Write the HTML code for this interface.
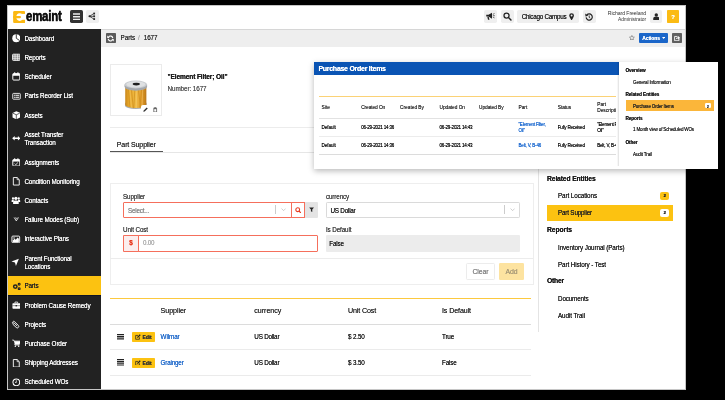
<!DOCTYPE html>
<html><head><meta charset="utf-8"><title>eMaint - Parts</title>
<style>
html,body{margin:0;padding:0}
body{will-change:transform;width:725px;height:400px;overflow:hidden;position:relative;background:#000;font-family:"Liberation Sans",sans-serif;color:#222}
.a{position:absolute}
.t{text-shadow:0 0 0.35px currentColor;position:absolute;white-space:nowrap;line-height:10px;height:10px;margin-top:-5px;font-size:6.3px;letter-spacing:-0.02em;color:#2a2a2a}
.b{font-weight:bold}
.sb{color:#fff;font-size:6.3px;left:24.4px}
.ic{position:absolute;left:11.6px;width:8.6px;height:8.6px;margin-top:-4.3px}
.hb{position:absolute;top:10.3px;height:12.6px;background:#efefef;border-radius:1.7px}
.ln{position:absolute;height:1px;background:#e4e4e4}
</style></head><body>
<!-- app frame -->
<div class="a" id="app" style="left:7.1px;top:4.5px;width:679.3px;height:385.8px;background:#fff;border:0.8px solid #c6c6c6;box-sizing:border-box"></div>
<!-- breadcrumb bar -->
<div class="a" style="left:101px;top:29px;width:584.3px;height:18px;background:#eeeeee"></div>
<div class="a" style="left:7.9px;top:28.6px;width:677.4px;height:1px;background:#d6d6d6"></div>
<!-- sidebar -->
<div class="a" id="side" style="left:7.9px;top:29px;width:93.4px;height:360.2px;background:#222"></div>
<div class="a" style="left:7.9px;top:276px;width:93.4px;height:19.5px;background:#0e1424"></div><div class="a" style="left:7.9px;top:276.4px;width:93.4px;height:18.7px;background:#fcc211"></div>
<!-- sidebar items -->
<svg class="ic" style="top:38.5px" viewBox="0 0 16 16"><circle cx="8" cy="8" r="7.5" fill="#fff"/><path d="M8 8V0.5M8 8l6 4" stroke="#222" stroke-width="1.6" fill="none"/></svg>
<div class="t sb" style="top:38.8px">Dashboard</div>
<svg class="ic" style="top:57.6px" viewBox="0 0 16 16"><rect x="1" y="2.2" width="14" height="11.6" rx="1.4" fill="#8a8a8a" stroke="#fff" stroke-width="1.5"/><path d="M1 6h14M1 9.9h14M5.7 2.2v11.6M10.3 2.2v11.6" stroke="#fff" stroke-width="1.1"/></svg>
<div class="t sb" style="top:57.8px">Reports</div>
<svg class="ic" style="top:76.7px" viewBox="0 0 16 16"><rect x="1.5" y="3" width="13" height="12" rx="1.5" fill="none" stroke="#fff" stroke-width="1.8"/><rect x="1.5" y="3" width="13" height="4" fill="#fff"/><rect x="4" y="0.5" width="2" height="4" fill="#fff"/><rect x="10" y="0.5" width="2" height="4" fill="#fff"/></svg>
<div class="t sb" style="top:76.8px">Scheduler</div>
<svg class="ic" style="top:95.8px;left:11.5px;width:9px" viewBox="0 0 16 16"><rect x="1" y="2.6" width="14" height="10.8" rx="1.3" fill="none" stroke="#fff" stroke-width="1.6"/><path d="M3.2 6.2h9.6M3.2 9.8h9.6" stroke="#fff" stroke-width="2"/><path d="M5.8 5v6" stroke="#222" stroke-width="0.8"/></svg>
<div class="t sb" style="top:95.8px">Parts Reorder List</div>
<svg class="ic" style="top:114.9px" viewBox="0 0 16 16"><path d="M8 0.5L15 3.5V12L8 15.5L1 12V3.5Z" fill="#fff"/><path d="M1.5 4L8 7L14.5 4M8 7V15" stroke="#222" stroke-width="1.3" fill="none"/></svg>
<div class="t sb" style="top:115.8px">Assets</div>
<svg class="ic" style="top:138.5px" viewBox="0 0 16 16"><path d="M0.3 8L5 3.8V6.5H11V3.8L15.7 8L11 12.2V9.5H5V12.2Z" fill="#fff"/></svg>
<div class="t sb" style="top:134.8px">Asset Transfer</div>
<div class="t sb" style="top:142.8px">Transaction</div>
<svg class="ic" style="top:162px" viewBox="0 0 16 16"><rect x="1.5" y="3" width="13" height="12" rx="1.5" fill="none" stroke="#fff" stroke-width="1.8"/><rect x="1.5" y="3" width="13" height="3.6" fill="#fff"/><rect x="4" y="0.5" width="2" height="4" fill="#fff"/><rect x="10" y="0.5" width="2" height="4" fill="#fff"/><path d="M5 10.5l2 2l4-4" stroke="#fff" stroke-width="1.5" fill="none"/></svg>
<div class="t sb" style="top:162.8px">Assignments</div>
<svg class="ic" style="top:181.3px" viewBox="0 0 16 16"><path d="M2.5 1h7l4 4v10h-11z" fill="none" stroke="#fff" stroke-width="1.7" stroke-linejoin="round"/><path d="M9.5 1v4h4" fill="none" stroke="#fff" stroke-width="1.3"/></svg>
<div class="t sb" style="top:181.8px">Condition Monitoring</div>
<svg class="ic" style="top:200.5px;left:11.4px;width:9.8px;height:8.6px;margin-top:-4.4px" viewBox="0 0 16 16"><circle cx="8" cy="4.4" r="3" fill="#fff"/><path d="M2.8 15v-3.4a3.4 3.4 0 0 1 3.4-3.4h3.6a3.4 3.4 0 0 1 3.4 3.4V15z" fill="#fff"/><circle cx="2.6" cy="4.2" r="2.1" fill="#fff"/><circle cx="13.4" cy="4.2" r="2.1" fill="#fff"/><path d="M0 11v-2a2.4 2.4 0 0 1 2.4-2.4h1.6V11zM16 11v-2a2.4 2.4 0 0 0-2.4-2.4h-1.6V11z" fill="#fff"/></svg>
<div class="t sb" style="top:200.8px">Contacts</div>
<svg class="ic" style="top:219.6px" viewBox="0 0 16 16"><path d="M4 4.6l4 6.4l4-6.4" stroke="#fff" stroke-width="1.5" fill="none"/><path d="M6.4 4.4l1.6 2.6l1.6-2.6" stroke="#fff" stroke-width="1.1" fill="none"/></svg>
<div class="t sb" style="top:219.8px">Failure Modes (Sub)</div>
<svg class="ic" style="top:239px;left:11.4px;width:9.6px;height:8.8px;margin-top:-4.4px" viewBox="0 0 16 16"><rect x="1" y="2" width="14" height="12" rx="1.6" fill="none" stroke="#fff" stroke-width="1.7"/><path d="M2.4 12.6V10l3.4-3.4l2.2 2l3.4-4l2.2 2.2v5.8z" fill="#fff"/><circle cx="4.8" cy="5.4" r="1.3" fill="#fff"/></svg>
<div class="t sb" style="top:238.8px">Interactive Plans</div>
<svg class="ic" style="top:262.4px;left:11.2px;width:8.4px" viewBox="0 0 16 16"><path d="M15 1L9.4 15.2L7.6 8.4L0.8 6.6Z" fill="#fff"/></svg>
<div class="t sb" style="top:258.8px">Parent Functional</div>
<div class="t sb" style="top:266.8px">Locations</div>
<svg class="ic" style="top:286px;left:11.8px;width:9.4px;height:8.6px" viewBox="0 0 16 16"><circle cx="5.4" cy="8.6" r="3.2" fill="none" stroke="#222" stroke-width="2.7"/><circle cx="12.6" cy="4" r="1.7" fill="none" stroke="#222" stroke-width="2.1"/><circle cx="12.6" cy="12.6" r="1.7" fill="none" stroke="#222" stroke-width="2.1"/></svg>
<div class="t sb" style="top:285.8px;color:#222">Parts</div>
<svg class="ic" style="top:305px" viewBox="0 0 16 16"><rect x="0.8" y="4" width="14.4" height="10.5" rx="1.3" fill="#fff"/><path d="M5.5 4V2h5v2" fill="none" stroke="#fff" stroke-width="1.5"/><path d="M0.8 8.7h14.4" stroke="#222" stroke-width="0.9"/><rect x="6.6" y="7.6" width="2.8" height="2.4" fill="#222"/></svg>
<div class="t sb" style="top:305.8px">Problem Cause Remedy</div>
<svg class="ic" style="top:324.4px;left:11.4px" viewBox="0 0 16 16"><path d="M2.6 4.4a2.3 2.3 0 0 1 3.6-1.6l7.4 7.2a2.7 2.7 0 0 1-3.8 3.9L3.6 8a1.6 1.6 0 0 1 2.3-2.2l5 4.8" fill="none" stroke="#fff" stroke-width="1.7" stroke-linecap="round"/></svg>
<div class="t sb" style="top:324.8px">Projects</div>
<svg class="ic" style="top:343.5px" viewBox="0 0 16 16"><path d="M0.5 2h2.6l0.6 2H15.5l-1.6 5.6H5.2l0.4 1.6h8.2" fill="none" stroke="#fff" stroke-width="1.5"/><path d="M3.7 4H15.5l-1.6 5.6H5.2z" fill="#fff"/><circle cx="6.2" cy="13.6" r="1.4" fill="#fff"/><circle cx="12.4" cy="13.6" r="1.4" fill="#fff"/></svg>
<div class="t sb" style="top:343.8px">Purchase Order</div>
<svg class="ic" style="top:363px" viewBox="0 0 16 16"><path d="M2.5 1h7l4 4v10h-11z" fill="none" stroke="#fff" stroke-width="1.7" stroke-linejoin="round"/><path d="M9.5 1v4h4" fill="none" stroke="#fff" stroke-width="1.3"/></svg>
<div class="t sb" style="top:362.8px">Shipping Addresses</div>
<svg class="ic" style="top:381.8px" viewBox="0 0 16 16"><circle cx="8" cy="8" r="6.3" fill="none" stroke="#fff" stroke-width="1.9"/><path d="M8 4.3V8.3H5.6" fill="none" stroke="#fff" stroke-width="1.4"/></svg>
<div class="t sb" style="top:381.8px">Scheduled WOs</div>
<!-- header -->
<svg class="a" style="left:13px;top:10.8px;width:12.4px;height:12.1px" viewBox="0 0 24 24"><rect width="24" height="24" rx="2.6" fill="#fbb812"/><ellipse cx="13" cy="12" rx="6.7" ry="7.6" fill="#fff"/><rect x="17" y="5.8" width="7" height="11.6" fill="#fff"/><path d="M0 9.7h13.4a2.3 2.3 0 0 1 0 4.6H0z" fill="#fbb812"/></svg>
<div class="t b" style="left:25.7px;top:16.1px;font-size:14.4px;color:#111;line-height:16px;height:16px;margin-top:-8px;transform:scaleX(0.79);transform-origin:0 50%;letter-spacing:-0.2px;-webkit-text-stroke:0.35px #111">emaint</div>
<div class="hb" style="left:70.1px;width:12.7px;background:#333"></div>
<svg class="a" style="left:72.6px;top:13px;width:7.8px;height:7.4px" viewBox="0 0 16 15"><path d="M0 2h16M0 7.5h16M0 13h16" stroke="#eee" stroke-width="3"/></svg>
<div class="hb" style="left:86.1px;width:12.9px"></div>
<svg class="a" style="left:88.4px;top:12.3px;width:8.2px;height:8.6px" viewBox="0 0 16 16"><path d="M3 8L11.5 2.6M3 8h9M3 8l8.5 5.4" stroke="#2a2a2a" stroke-width="1.5" fill="none"/><circle cx="3" cy="8" r="2.1" fill="#2a2a2a"/><rect x="10.4" y="0.8" width="3.4" height="3.6" fill="#2a2a2a"/><rect x="10.4" y="6.2" width="3.4" height="3.6" fill="#2a2a2a"/><rect x="10.4" y="11.6" width="3.4" height="3.6" fill="#2a2a2a"/></svg>
<div class="hb" style="left:484.1px;width:13.4px"></div>
<svg class="a" style="left:486.4px;top:12.4px;width:9px;height:8.4px" viewBox="0 0 18 16"><path d="M0.5 5.2h4.5l7-4.2v12l-7-4.2H0.5z" fill="#222"/><path d="M2.6 9l1.4 6h3l-1.6-6z" fill="#222"/><path d="M13.6 4.4l3.4-1.8M13.8 7h3.8M13.6 9.6l3.4 1.8" stroke="#222" stroke-width="1.3" fill="none"/></svg>
<div class="hb" style="left:501px;width:12.9px"></div>
<svg class="a" style="left:503.2px;top:12.4px;width:8.6px;height:8.6px" viewBox="0 0 16 16"><circle cx="6.6" cy="6.6" r="4.7" fill="none" stroke="#222" stroke-width="2.4"/><path d="M10.2 10.2l4.6 4.6" stroke="#222" stroke-width="2.8" stroke-linecap="round"/></svg>
<div class="hb" style="left:517.4px;width:61.6px"></div>
<div class="t" style="left:521.7px;top:16.5px;font-size:6.30px;letter-spacing:-0.259px;color:#222">Chicago Campus</div>
<svg class="a" style="left:569.2px;top:12.8px;width:5.2px;height:7.6px" viewBox="0 0 10 15"><path d="M5 0.3a4.7 4.7 0 0 1 4.7 4.7c0 3.2-4.7 9.7-4.7 9.7S0.3 8.2 0.3 5A4.7 4.7 0 0 1 5 0.3z" fill="#222"/><circle cx="5" cy="5" r="1.9" fill="#eee"/></svg>
<div class="hb" style="left:583px;width:12.7px"></div>
<svg class="a" style="left:585.2px;top:12.5px;width:8.2px;height:8.2px" viewBox="0 0 16 16"><path d="M3.4 4.2A6 6 0 1 1 2.2 8.6" fill="none" stroke="#222" stroke-width="2.3"/><path d="M0.4 1.2l0.6 5.8l5.2-1.4z" fill="#222"/><path d="M8.2 4.8V8.6l2.2 1.4" fill="none" stroke="#222" stroke-width="1.7"/></svg>
<div class="t" style="right:79px;top:13.2px;font-size:5.20px;letter-spacing:-0.099px;color:#333;text-shadow:none">Richard Freeland</div>
<div class="t" style="right:79px;top:19.7px;font-size:4.90px;letter-spacing:-0.066px;color:#333;text-shadow:none">Administrator</div>
<div class="hb" style="left:649.7px;width:12.7px"></div>
<svg class="a" style="left:652.8px;top:12.8px;width:6.6px;height:7.6px" viewBox="0 0 14 16"><circle cx="7" cy="4.2" r="3.6" fill="#222"/><path d="M0.5 15.5v-3.8a3.6 3.6 0 0 1 3.6-3.6h5.8a3.6 3.6 0 0 1 3.6 3.6v3.8z" fill="#222"/></svg>
<div class="hb" style="left:667px;width:12px;background:#fbbb14;border-radius:0.8px;top:9.9px;height:12.8px"></div>
<div class="t b" style="left:667px;width:12px;text-align:center;top:16.8px;font-size:5.82px;color:#fff">?</div>
<!-- breadcrumb -->
<div class="a" style="left:106px;top:33.2px;width:9.8px;height:9.6px;background:#5a5a5a;border-radius:0.8px"></div>
<svg class="a" style="left:107.4px;top:34.5px;width:7px;height:7px" viewBox="0 0 16 16"><path d="M13.2 7A5.4 5.4 0 0 0 3.6 4.4M2.8 9A5.4 5.4 0 0 0 12.4 11.6" fill="none" stroke="#fff" stroke-width="2.6"/><path d="M0.6 1.2v5.4h5.4zM15.4 14.8V9.4h-5.4z" fill="#fff"/></svg>
<div class="t" style="left:120.6px;top:38.1px;font-size:6.30px;letter-spacing:-0.061px;color:#333">Parts</div>
<div class="t" style="left:138px;top:38.1px;font-size:6.39px;color:#aaa">/</div>
<div class="t" style="left:143.7px;top:38.1px;font-size:6.30px;letter-spacing:-0.053px;color:#333">1677</div>
<svg class="a" style="left:629.2px;top:34.8px;width:5.8px;height:5.6px" viewBox="0 0 16 16"><path d="M8 1.2l2.1 4.5l4.9 0.6l-3.6 3.4l0.9 4.9L8 12.2l-4.3 2.4l0.9-4.9L1 6.3l4.9-0.6z" fill="none" stroke="#444" stroke-width="1.3" stroke-linejoin="round"/></svg>
<div class="a" style="left:639.4px;top:32.5px;width:28.9px;height:10.6px;background:#1b66c9;border-radius:1px"></div>
<div class="t b" style="left:642.3px;top:37.9px;font-size:5.00px;letter-spacing:-0.119px;color:#fff">Actions</div>
<svg class="a" style="left:662px;top:37px;width:3.2px;height:2px" viewBox="0 0 8 5"><path d="M0 0h8L4 5z" fill="#fff"/></svg>
<div class="a" style="left:672px;top:32.5px;width:9.7px;height:10.6px;background:#5f5f5f;border-radius:0.8px"></div>
<svg class="a" style="left:673.8px;top:34.6px;width:6.2px;height:6.4px" viewBox="0 0 16 16"><path d="M9 3.5H1.5v11h11.5V10" fill="none" stroke="#fff" stroke-width="2.2"/><path d="M4.6 11.4c0.4-3.8 2.8-5.6 6-5.6V2.6l5 4.6l-5 4.6V8.8c-2.6 0-4.6 0.6-6 2.6z" fill="#fff"/></svg>

<!-- part header -->
<div class="a" style="left:110.3px;top:64.2px;width:51.6px;height:51.8px;border:0.6px solid #ebebeb;box-sizing:border-box;background:#fff"></div>
<svg class="a" style="left:124.2px;top:79.8px;width:23.6px;height:30.2px" viewBox="0 0 48 61">
<defs><linearGradient id="fg" x1="0" x2="1"><stop offset="0" stop-color="#c8861a"/><stop offset="0.18" stop-color="#e9a92b"/><stop offset="0.5" stop-color="#f0bb45"/><stop offset="0.8" stop-color="#e0992a"/><stop offset="1" stop-color="#b9761a"/></linearGradient></defs>
<path d="M2 46v6a22 7 0 0 0 44 0v-6z" fill="#a9adb2"/>
<path d="M2.5 12v38a21.5 6.6 0 0 0 43 0V12z" fill="url(#fg)"/>
<path d="M9 17l3 38M15 18l4 39M22 19l-2 38M29 19l5 37M36 18l-4 38M41 17l1 36" stroke="#c98a1c" stroke-width="1.3" fill="none"/>
<path d="M12 18l3 38M26 19l-1 38M38 18l-1 37" stroke="#f8d88a" stroke-width="1" fill="none" opacity="0.7"/>
<path d="M1 9v4.5a23 8 0 0 0 46 0V9z" fill="#a4a8ad"/>
<ellipse cx="24" cy="9" rx="23" ry="8" fill="#c9ccd0"/>
<ellipse cx="24" cy="8.6" rx="19.5" ry="6.2" fill="#dfe1e3"/>
<ellipse cx="25" cy="8" rx="7.4" ry="2.8" fill="#1f1f1f"/>
</svg>
<div class="a" style="left:141px;top:105.4px;width:20px;height:10px;background:#fff;border-radius:2px 0 0 0"></div>
<svg class="a" style="left:142.6px;top:107px;width:5.2px;height:5.2px" viewBox="0 0 16 16"><path d="M1 15l1-4.2L11.4 1.4l3.2 3.2L5.2 14z" fill="#333"/></svg>
<svg class="a" style="left:153.4px;top:106.8px;width:4.4px;height:5.6px" viewBox="0 0 14 16"><path d="M1 3h12M5 3V1h4v2" stroke="#333" stroke-width="1.8" fill="none"/><path d="M2.5 4.5h9V15h-9z" fill="none" stroke="#333" stroke-width="2"/></svg>
<div class="t b" style="left:167.5px;top:77px;font-size:6.60px;letter-spacing:-0.130px;color:#1d1d1d">"Element Filter; Oil"</div>
<div class="t" style="left:167.5px;top:89px;font-size:6.30px;letter-spacing:-0.077px;color:#555">Number: 1677</div>
<div class="ln" style="left:110px;top:127.2px;width:423px;background:#ececec"></div>
<div class="t" style="left:116.8px;top:145.2px;font-size:7.00px;letter-spacing:-0.113px;color:#333">Part Supplier</div>
<div class="ln" style="left:110px;top:151.6px;width:423px;background:#e6e6e6"></div>
<div class="a" style="left:110px;top:150.6px;width:52.5px;height:1.4px;background:#555"></div>
<!-- form card -->
<div class="a" style="left:110.4px;top:183px;width:423.4px;height:102.2px;border:0.6px solid #eeeeee;box-sizing:border-box"></div>
<div class="ln" style="left:110.4px;top:258.2px;width:423px;background:#ececec"></div>
<div class="t" style="left:123px;top:196.8px;font-size:6.30px;letter-spacing:-0.139px;color:#444">Supplier</div>
<div class="a" style="left:123px;top:201.6px;width:168.6px;height:16.6px;border:0.7px solid #f56f5c;box-sizing:border-box;border-radius:1px 0 0 1px"></div>
<div class="t" style="left:128px;top:210.6px;font-size:6.30px;letter-spacing:-0.196px;color:#8a8a8a">Select...</div>
<div class="a" style="left:275px;top:205.4px;width:0.6px;height:9px;background:#ccc"></div>
<svg class="a" style="left:280.5px;top:208.4px;width:5.2px;height:3.2px" viewBox="0 0 10 6"><path d="M1 1l4 4l4-4" fill="none" stroke="#bbb" stroke-width="1.4"/></svg>
<div class="a" style="left:291px;top:201.6px;width:14px;height:16.6px;border:0.7px solid #f56f5c;box-sizing:border-box;background:#fff"></div>
<svg class="a" style="left:294.8px;top:206.7px;width:6.6px;height:6.6px" viewBox="0 0 16 16"><circle cx="6.6" cy="6.6" r="4.6" fill="none" stroke="#e8391f" stroke-width="2.6"/><path d="M10.2 10.2l4.4 4.4" stroke="#e8391f" stroke-width="3" stroke-linecap="round"/></svg>
<div class="a" style="left:305px;top:201.6px;width:13px;height:16.6px;background:#e4e4e4;border-radius:0 1px 1px 0"></div>
<svg class="a" style="left:308.8px;top:207.4px;width:5.2px;height:5.4px" viewBox="0 0 14 14"><path d="M0.5 1h13L8.8 6.8V13L5.2 11V6.8z" fill="#222"/></svg>
<div class="t" style="left:123px;top:230px;font-size:6.30px;letter-spacing:-0.101px;color:#444">Unit Cost</div>
<div class="a" style="left:123px;top:235px;width:195px;height:16.6px;border:0.7px solid #f56f5c;box-sizing:border-box;border-radius:1px"></div>
<div class="a" style="left:123px;top:235px;width:15.8px;height:16.6px;border:0.7px solid #f56f5c;box-sizing:border-box;background:#fbeeee;border-radius:1px 0 0 1px"></div>
<div class="t b" style="left:123px;width:15.8px;text-align:center;top:243.4px;font-size:6.30px;letter-spacing:-0.103px;color:#e8391f">$</div>
<div class="t" style="left:143px;top:243.4px;font-size:6.30px;letter-spacing:-0.265px;color:#aaa">0.00</div>
<div class="t" style="left:326px;top:196.8px;font-size:6.30px;letter-spacing:-0.144px;color:#444">currency</div>
<div class="a" style="left:326px;top:201.6px;width:194.4px;height:16.6px;border:0.6px solid #dadada;box-sizing:border-box;border-radius:1.2px"></div>
<div class="t" style="left:330.5px;top:210.6px;font-size:6.30px;letter-spacing:-0.217px;color:#222">US Dollar</div>
<div class="a" style="left:504.2px;top:205.4px;width:0.6px;height:9px;background:#ccc"></div>
<svg class="a" style="left:509.6px;top:208.4px;width:5.2px;height:3.2px" viewBox="0 0 10 6"><path d="M1 1l4 4l4-4" fill="none" stroke="#bbb" stroke-width="1.4"/></svg>
<div class="t" style="left:326px;top:230px;font-size:6.30px;letter-spacing:-0.131px;color:#444">Is Default</div>
<div class="a" style="left:326px;top:234.6px;width:194.4px;height:17px;background:#ececec;border-radius:1px"></div>
<div class="t" style="left:329.2px;top:244px;font-size:6.30px;letter-spacing:-0.141px;color:#222">False</div>
<div class="a" style="left:466px;top:263.4px;width:28.8px;height:16.8px;border:0.6px solid #ececec;box-sizing:border-box;border-radius:1.4px;background:#fff"></div>
<div class="t" style="left:466px;width:28.8px;text-align:center;top:271.8px;font-size:6.90px;letter-spacing:-0.098px;color:#858585">Clear</div>
<div class="a" style="left:499px;top:263.4px;width:25.2px;height:16.8px;border-radius:1.2px;background:#fde3a0"></div>
<div class="t" style="left:499px;width:25.2px;text-align:center;top:271.8px;font-size:6.90px;letter-spacing:-0.092px;color:#a99a78">Add</div>
<!-- table -->
<div class="a" style="left:110.4px;top:297.6px;width:421px;height:1.1px;background:#fcc93f"></div>
<div class="t" style="left:160.6px;top:311.4px;font-size:7.10px;letter-spacing:-0.069px;color:#333">Supplier</div>
<div class="t" style="left:254.3px;top:311.4px;font-size:7.10px;letter-spacing:-0.028px;color:#333">currency</div>
<div class="t" style="left:348px;top:311.4px;font-size:7.10px;letter-spacing:-0.133px;color:#333">Unit Cost</div>
<div class="t" style="left:442px;top:311.4px;font-size:7.10px;letter-spacing:-0.099px;color:#333">Is Default</div>
<div class="a" style="left:110.4px;top:323.7px;width:421px;height:1.3px;background:#dcdcdc"></div>
<div class="ln" style="left:110.4px;top:349.2px;width:421px;background:#ebebeb"></div>
<div class="ln" style="left:110.4px;top:374.8px;width:421px;background:#ebebeb"></div>

<svg class="a" style="left:116.6px;top:333.6px;width:7.4px;height:6.4px" viewBox="0 0 15 13"><path d="M0 1.2h15M0 4.8h15M0 8.4h15M0 12h15" stroke="#222" stroke-width="2.1"/></svg>
<div class="a" style="left:132.4px;top:331.7px;width:22.2px;height:10.2px;background:#fcc211;border-radius:0.8px"></div>
<svg class="a" style="left:134.8px;top:333.8px;width:6px;height:5.8px" viewBox="0 0 16 16"><path d="M12 9v5.5H1.5V4H8" fill="none" stroke="#222" stroke-width="2"/><path d="M5.5 11l0.8-3.4L13 1l2.4 2.4L8.8 10z" fill="#222"/></svg>
<div class="t b" style="left:142.4px;top:336.9px;font-size:5.03px;color:#333">Edit</div>
<div class="t" style="left:160.6px;top:337.2px;font-size:6.30px;letter-spacing:-0.099px;color:#1b66c9">Wilmar</div>
<div class="t" style="left:254.3px;top:337.2px;font-size:6.30px;letter-spacing:-0.217px;color:#222">US Dollar</div>
<div class="t" style="left:348px;top:337.2px;font-size:6.30px;letter-spacing:-0.136px;color:#222">$ 2.50</div>
<div class="t" style="left:442px;top:337.2px;font-size:6.30px;letter-spacing:-0.180px;color:#222">True</div>
<svg class="a" style="left:116.6px;top:359.4px;width:7.4px;height:6.4px" viewBox="0 0 15 13"><path d="M0 1.2h15M0 4.8h15M0 8.4h15M0 12h15" stroke="#222" stroke-width="2.1"/></svg>
<div class="a" style="left:132.4px;top:357.5px;width:22.2px;height:10.2px;background:#fcc211;border-radius:0.8px"></div>
<svg class="a" style="left:134.8px;top:359.6px;width:6px;height:5.8px" viewBox="0 0 16 16"><path d="M12 9v5.5H1.5V4H8" fill="none" stroke="#222" stroke-width="2"/><path d="M5.5 11l0.8-3.4L13 1l2.4 2.4L8.8 10z" fill="#222"/></svg>
<div class="t b" style="left:142.4px;top:362.7px;font-size:5.03px;color:#333">Edit</div>
<div class="t" style="left:160.6px;top:363px;font-size:6.30px;letter-spacing:-0.189px;color:#1b66c9">Grainger</div>
<div class="t" style="left:254.3px;top:363px;font-size:6.30px;letter-spacing:-0.217px;color:#222">US Dollar</div>
<div class="t" style="left:348px;top:363px;font-size:6.30px;letter-spacing:-0.136px;color:#222">$ 3.50</div>
<div class="t" style="left:442px;top:363px;font-size:6.30px;letter-spacing:-0.141px;color:#222">False</div>
<!-- right sidebar -->
<div class="a" style="left:538.2px;top:168px;width:0.7px;height:164px;background:#e4e4e4"></div>
<div class="t b" style="left:547px;top:179px;font-size:6.80px;letter-spacing:-0.151px;color:#1d1d1d">Related Entities</div>
<div class="t" style="left:558px;top:195.6px;font-size:6.30px;letter-spacing:-0.091px;color:#222">Part Locations</div>
<div class="a" style="left:660.4px;top:191.9px;width:8.6px;height:7.8px;background:#fcc211;border-radius:2px"></div>
<div class="t b" style="left:660.4px;width:8.6px;text-align:center;top:195.9px;font-size:4.36px;color:#222">2</div>
<div class="a" style="left:547px;top:204.7px;width:126px;height:16.6px;background:#fcc211"></div>
<div class="t" style="left:558px;top:213.2px;font-size:6.30px;letter-spacing:-0.186px;color:#222">Part Supplier</div>
<div class="a" style="left:660.4px;top:209.2px;width:8.6px;height:7.6px;background:#fff;border-radius:2px"></div>
<div class="t b" style="left:660.4px;width:8.6px;text-align:center;top:213.1px;font-size:4.36px;color:#222">2</div>
<div class="t b" style="left:547px;top:230.2px;font-size:6.80px;letter-spacing:-0.099px;color:#1d1d1d">Reports</div>
<div class="t" style="left:558px;top:248px;font-size:6.30px;letter-spacing:-0.099px;color:#222">Inventory Journal (Parts)</div>
<div class="t" style="left:558px;top:265px;font-size:6.30px;letter-spacing:-0.102px;color:#222">Part History - Test</div>
<div class="t b" style="left:547px;top:281.4px;font-size:6.80px;letter-spacing:-0.227px;color:#1d1d1d">Other</div>
<div class="t" style="left:558px;top:299px;font-size:6.30px;letter-spacing:-0.151px;color:#222">Documents</div>
<div class="t" style="left:558px;top:316px;font-size:6.30px;letter-spacing:-0.092px;color:#222">Audit Trail</div>

<!-- popup -->
<div class="a" style="left:313.6px;top:62px;width:404.6px;height:106.8px;background:#fff;box-shadow:0 2px 6px rgba(0,0,0,0.28)"></div>
<div class="a" style="left:313.6px;top:62px;width:306px;height:13.2px;background:#0a54b4"></div>
<div class="t b" style="left:318.4px;top:69px;font-size:7px;letter-spacing:-0.27px;color:#fff">Purchase Order Items</div>
<div class="a" id="ptab" style="left:318.6px;top:90px;width:297px;height:70px;overflow:hidden">
<div class="a" style="left:0;top:6px;width:297px;height:0.9px;background:#fbd276"></div>
<div class="ln" style="left:0;top:27.6px;width:297px;background:#e2e2e2"></div>
<div class="ln" style="left:0;top:45.8px;width:297px;background:#ececec;height:0.7px"></div>
<div class="ln" style="left:0;top:64px;width:297px;background:#dcdcdc"></div>

<div class="t" style="left:3px;top:18.3px;font-size:4.80px;letter-spacing:0.032px;color:#333">Site</div>
<div class="t" style="left:42.6px;top:18.3px;font-size:4.80px;letter-spacing:-0.081px;color:#333">Created On</div>
<div class="t" style="left:81.4px;top:18.3px;font-size:4.80px;letter-spacing:-0.001px;color:#333">Created By</div>
<div class="t" style="left:120.9px;top:18.3px;font-size:4.80px;letter-spacing:-0.038px;color:#333">Updated On</div>
<div class="t" style="left:160.4px;top:18.3px;font-size:4.80px;letter-spacing:-0.048px;color:#333">Updated By</div>
<div class="t" style="left:199.9px;top:18.3px;font-size:4.80px;letter-spacing:-0.001px;color:#333">Part</div>
<div class="t" style="left:239.2px;top:18.3px;font-size:4.80px;letter-spacing:-0.051px;color:#333">Status</div>
<div class="t" style="left:278.6px;top:15px;font-size:4.80px;letter-spacing:-0.001px;color:#333">Part</div>
<div class="t" style="left:278.6px;top:21.4px;font-size:4.80px;letter-spacing:0.027px;color:#333">Description</div>
<div class="t" style="left:3px;top:38.1px;font-size:4.55px;letter-spacing:-0.059px;color:#111">Default</div>
<div class="t" style="left:42.6px;top:38.1px;font-size:4.55px;letter-spacing:-0.183px;color:#111">06-29-2021 14:36</div>
<div class="t" style="left:120.9px;top:38.1px;font-size:4.55px;letter-spacing:-0.183px;color:#111">06-29-2021 14:43</div>
<div class="t" style="left:239.2px;top:38.1px;font-size:4.55px;letter-spacing:-0.203px;color:#111">Fully Received</div>
<div class="t" style="left:199.9px;top:35.3px;font-size:4.55px;letter-spacing:-0.231px;color:#1766cf">"Element Filter,</div>
<div class="t" style="left:199.9px;top:41px;font-size:4.55px;letter-spacing:-0.219px;color:#1766cf">Oil"</div>
<div class="t" style="left:278.6px;top:35.3px;font-size:4.55px;letter-spacing:-0.247px;color:#111">"Element Filter;</div>
<div class="t" style="left:278.6px;top:41px;font-size:4.55px;letter-spacing:-0.219px;color:#111">Oil"</div>
<div class="t" style="left:3px;top:56.3px;font-size:4.55px;letter-spacing:-0.059px;color:#111">Default</div>
<div class="t" style="left:42.6px;top:56.3px;font-size:4.55px;letter-spacing:-0.183px;color:#111">06-29-2021 14:36</div>
<div class="t" style="left:120.9px;top:56.3px;font-size:4.55px;letter-spacing:-0.183px;color:#111">06-29-2021 14:43</div>
<div class="t" style="left:239.2px;top:56.3px;font-size:4.55px;letter-spacing:-0.203px;color:#111">Fully Received</div>
<div class="t" style="left:199.9px;top:56.3px;font-size:4.55px;letter-spacing:-0.194px;color:#1766cf">Belt, V, B-46</div>
<div class="t" style="left:278.6px;top:56.3px;font-size:4.55px;letter-spacing:-0.194px;color:#111">Belt, V, B-46</div>
</div>
<div class="a" style="left:619.4px;top:62px;width:98.8px;height:104px;background:#fff"></div><div class="a" style="left:617px;top:62px;width:2.4px;height:103.6px;background:linear-gradient(to right,rgba(0,0,0,0),rgba(0,0,0,0.13))"></div>
<div class="t b" style="left:625.5px;top:70.7px;font-size:4.70px;letter-spacing:-0.113px;color:#1d1d1d">Overview</div>
<div class="t" style="left:633px;top:82.7px;font-size:4.55px;letter-spacing:-0.127px;color:#222">General Information</div>
<div class="t b" style="left:625.5px;top:94.7px;font-size:4.70px;letter-spacing:-0.079px;color:#1d1d1d">Related Entities</div>
<div class="a" style="left:625.5px;top:100px;width:88.6px;height:11.4px;background:#fbb63a"></div>
<div class="t" style="left:633px;top:106.7px;font-size:4.55px;letter-spacing:-0.185px;color:#222">Purchase Order Items</div>
<div class="a" style="left:705.2px;top:103.4px;width:5.4px;height:4.6px;background:#fff;border-radius:1.2px"></div>
<div class="t b" style="left:705.2px;width:5.4px;text-align:center;top:106.7px;font-size:3.12px;color:#222">2</div>
<div class="t b" style="left:625.5px;top:118.6px;font-size:4.70px;letter-spacing:-0.108px;color:#1d1d1d">Reports</div>
<div class="t" style="left:633px;top:130.2px;font-size:4.55px;letter-spacing:-0.173px;color:#222">1 Month view of Scheduled WOs</div>
<div class="t b" style="left:625.5px;top:142.7px;font-size:4.70px;letter-spacing:-0.107px;color:#1d1d1d">Other</div>
<div class="t" style="left:633px;top:154.7px;font-size:4.55px;letter-spacing:-0.112px;color:#222">Audit Trail</div>

</body></html>
